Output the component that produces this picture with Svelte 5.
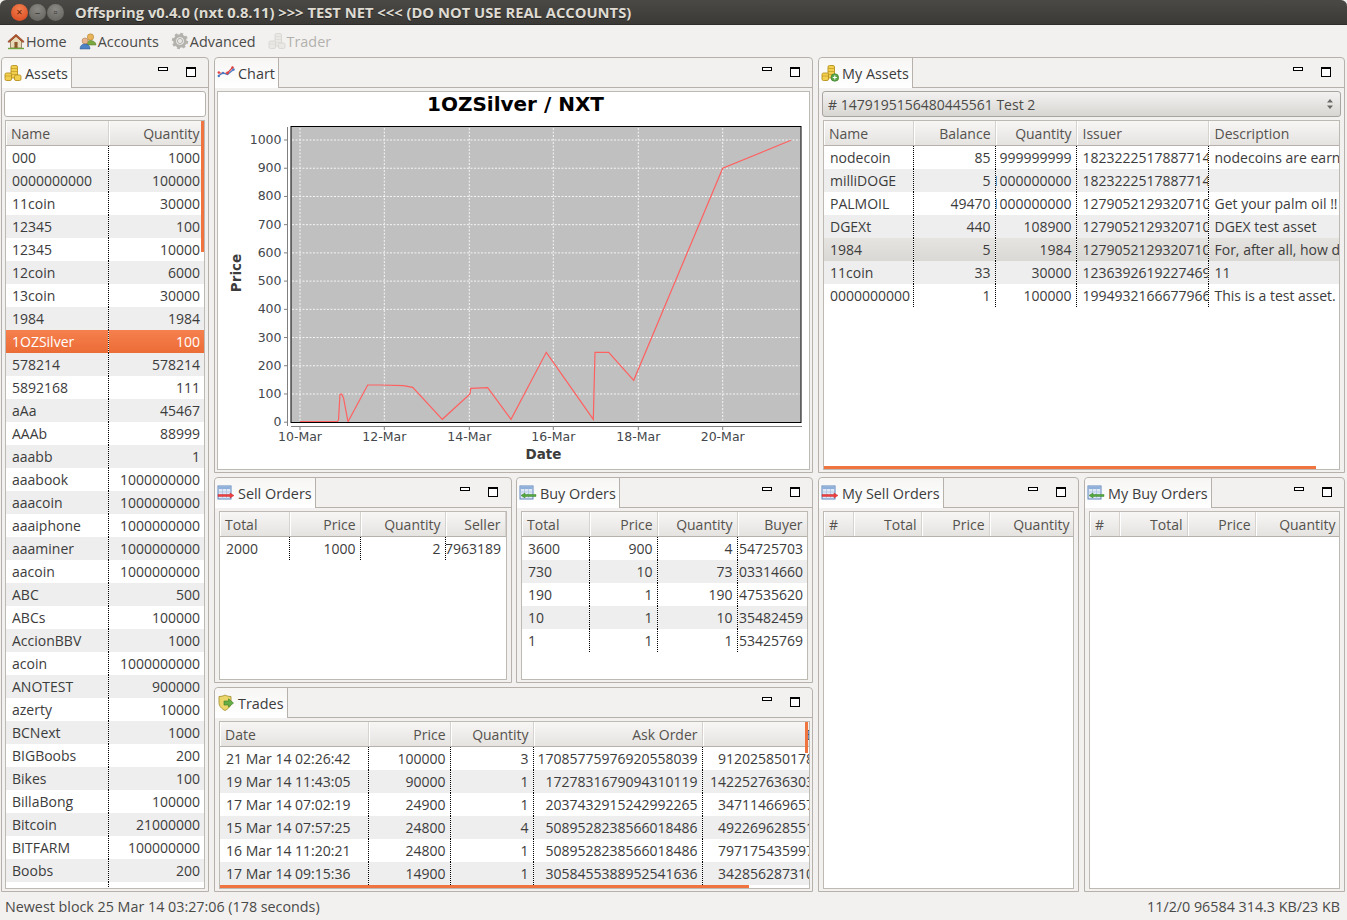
<script>
  const assets = [['000','1000'],['0000000000','100000'],['11coin','30000'],['12345','100'],['12345','10000'],['12coin','6000'],['13coin','30000'],['1984','1984'],['1OZSilver','100'],['578214','578214'],['5892168','111'],['aAa','45467'],['AAAb','88999'],['aaabb','1'],['aaabook','1000000000'],['aaacoin','1000000000'],['aaaiphone','1000000000'],['aaaminer','1000000000'],['aacoin','1000000000'],['ABC','500'],['ABCs','100000'],['AccionBBV','1000'],['acoin','1000000000'],['ANOTEST','900000'],['azerty','10000'],['BCNext','1000'],['BIGBoobs','200'],['Bikes','100'],['BillaBong','100000'],['Bitcoin','21000000'],['BITFARM','100000000'],['Boobs','200'],['\u00a0','\u00a0']];
  const myAssets = [
    ['nodecoin','85','999999999','18232225178877144','nodecoins are earned by running nodes'],
    ['milliDOGE','5','1000000000','18232225178877144',''],
    ['PALMOIL','49470','1000000000','12790521293207100','Get your palm oil !!'],
    ['DGEXt','440','108900','12790521293207100','DGEX test asset'],
    ['1984','5','1984','12790521293207100','For, after all, how do we know'],
    ['11coin','33','30000','12363926192274690','11'],
    ['0000000000','1','100000','19949321666779660','This is a test asset.']];
  const trades = [
    ['21 Mar 14 02:26:42','100000','3','17085775976920558039','9120258501780000000'],
    ['19 Mar 14 11:43:05','90000','1','1727831679094310119','14225276363030000000'],
    ['17 Mar 14 07:02:19','24900','1','2037432915242992265','3471146696570000000'],
    ['15 Mar 14 07:57:25','24800','4','5089528238566018486','4922696285510000000'],
    ['16 Mar 14 11:20:21','24800','1','5089528238566018486','7971754359970000000'],
    ['17 Mar 14 09:15:36','14900','1','3058455388952541636','3428562873100000000']];
  const buys = [['3600','900','4','1154725703'],['730','10','73','1103314660'],['190','1','190','1147535620'],['10','1','10','1135482459'],['1','1','1','1153425769']];

  const yTicks = [0,100,200,300,400,500,600,700,800,900,1000].map(v => ({ v, y: 422.2 - v * 0.2822 }));
  const xTicks = [['10-Mar',300],['12-Mar',384.3],['14-Mar',469.3],['16-Mar',553.3],['18-Mar',638.3],['20-Mar',722.7]];
  const line = '300,421.7 337.3,421.7 338.5,420 340,394.5 341.7,394 343.5,398 348,421.7 367.7,385 380,385 403.3,385.7 412.7,387.3 442.3,419.3 470,394 470.7,388.3 487.7,387.7 511,419.3 546.3,352.3 593.3,419.3 595,352.3 608.7,352.3 633.7,380.3 722.7,168.3 791,140.3';
</script>

{#snippet icon(name)}
  <svg class="ico" viewBox="0 0 18 18" width="18" height="18" aria-hidden="true">
    {#if name === 'home'}
      <path d="M3.500 9v7h11V9L9 4z" fill="#e8d9b8" stroke="#8a7350" stroke-width=".8"/>
      <path d="M.8 9.600 9 2.200l8.200 7.400-1.200 1L9 4.400 2 10.600z" fill="#b5532a" stroke="#7c3a1c" stroke-width=".5"/>
      <rect x="7.400" y="10" width="3.200" height="6" fill="#8a5a2c"/>
      <rect x="1" y="15.800" width="16" height="1.400" fill="#6fa33c"/>
    {:else if name === 'people'}
      <circle cx="11.500" cy="5" r="3.200" fill="#e9b35a" stroke="#a97a2a" stroke-width=".5"/>
      <path d="M7 13c0-3 2-4.500 4.500-4.500S17 10 17 13z" fill="#7aa83f" stroke="#55782a" stroke-width=".5"/>
      <circle cx="6" cy="9" r="3" fill="#e8b48a" stroke="#a8754f" stroke-width=".5"/>
      <path d="M1 17c0-3.500 2.200-5 5-5s5 1.500 5 5z" fill="#4d82c4" stroke="#2f5a92" stroke-width=".5"/>
    {:else if name === 'gear'}
      <circle cx="9" cy="9" r="5.300" fill="none" stroke="#b4b2ad" stroke-width="3"/>
      <circle cx="9" cy="9" r="7" fill="none" stroke="#b4b2ad" stroke-width="2.400" stroke-dasharray="2.800 2.700"/>
      <circle cx="9" cy="9" r="2.600" fill="#e8e6e2" stroke="#8c8a85" stroke-width=".6"/>
    {:else if name === 'coinsgrey' || name === 'coins' || name === 'coinsplus'}
      {@const f = name === 'coinsgrey' ? '#e9e8e5' : '#f3cf4f'}
      {@const s = name === 'coinsgrey' ? '#d8d6d2' : '#b8921f'}
      <rect x="7" y="1.500" width="6.500" height="12.500" rx="1.500" fill={f} stroke={s} stroke-width=".9"/>
      <path d="M7 4.500h6.500M7 7.500h6.500M7 10.500h6.500" stroke={s} stroke-width=".6"/>
      <rect x="1" y="9" width="6.500" height="7.500" rx="1.500" fill={f} stroke={s} stroke-width=".9"/>
      <path d="M1 12h6.500" stroke={s} stroke-width=".6"/>
      <rect x="10.500" y="11" width="6.500" height="5.500" rx="1.500" fill={f} stroke={s} stroke-width=".9"/>
      {#if name === 'coinsplus'}
        <circle cx="13.800" cy="13.500" r="3.800" fill="#5aa84a" stroke="#3a7a30" stroke-width=".6"/>
        <path d="M11.800 13.500h4M13.800 11.500v4" stroke="#fff" stroke-width="1.100"/>
      {/if}
    {:else if name === 'chart'}
      <path d="M1 8.500 6 9.500 10.500 9 16 3" fill="none" stroke="#e2403f" stroke-width="1.200"/>
      <path d="M1 12 6 9 10.500 10.500 16.500 5.500" fill="none" stroke="#4a78c4" stroke-width="1.200"/>
      <g fill="#e2403f"><circle cx="1.800" cy="8.500" r="1.200"/><circle cx="10.500" cy="9" r="1.400"/><circle cx="15.500" cy="3.500" r="1.200"/></g>
      <g fill="#4a78c4"><circle cx="1.800" cy="12" r="1.200"/><circle cx="6" cy="9" r="1.200"/><circle cx="16.500" cy="5.500" r="1.200"/></g>
    {:else if name === 'sell' || name === 'buy'}
      <rect x="1" y="2" width="13" height="13" fill="#dfe8f4" stroke="#5f86bc" stroke-width="1"/>
      <rect x="1.500" y="2.500" width="12" height="2.500" fill="#8fb0da"/>
      <path d="M1.500 8h12M1.500 11h12M5.500 5v10M9.500 5v10" stroke="#a8c0de" stroke-width=".7"/>
      {#if name === 'sell'}
        <path d="M1 10.500h12V9l4 2.500-4 2.500v-1.500H1z" fill="#ee4040" stroke="#c42020" stroke-width=".4"/>
      {:else}
        <path d="M17 10.500H6V9l-4 2.500L6 14v-1.500h11z" fill="#55a83c" stroke="#2f7a20" stroke-width=".4"/>
      {/if}
    {:else if name === 'trades'}
      <path d="M2 2.500c3 0 5-.800 6-1.500 1 .7 3 1.500 6 1.500v6c0 4-3 6.500-6 8-3-1.500-6-4-6-8z" fill="#ecd66a" stroke="#a8953a" stroke-width=".9"/>
      <path d="M7 7h4.500V4.800L16.500 9l-5 4.200V11H7z" fill="#67ad45" stroke="#3e7c28" stroke-width=".6"/>
    {/if}
  </svg>
{/snippet}

{#snippet panelHead(title, ic)}
  <div class="head">
    <div class="tab">{@render icon(ic)}<span>{title}</span></div>
    <div class="ctrls"><span class="min"></span><span class="max"></span></div>
  </div>
{/snippet}

{#snippet grid(heads, cols, rows, aligns, opts = {})}
  <table style={`width:${cols.reduce((a, b) => a + b, 0)}px`}>
    <colgroup>{#each cols as c}<col style={`width:${c}px`} />{/each}</colgroup>
    <thead><tr>{#each heads as h, i}<th class:r={aligns[i] === 'r'}>{h}</th>{/each}</tr></thead>
    <tbody>
      {#each rows as row, ri}
        <tr class:alt={ri % 2 === 1} class:sel={opts.sel === ri} class:hov={opts.hov === ri}>
          {#each row as c, i}<td><div class="cell" class:r={aligns[i] === 'r'}><span>{c}</span></div></td>{/each}
        </tr>
      {/each}
    </tbody>
  </table>
{/snippet}

<div class="win">
  <header class="title">
    <div class="btns"><span class="b close">×</span><span class="b mn">–</span><span class="b mx">▫</span></div>
    <span class="ttl">Offspring v0.4.0 (nxt 0.8.11) &gt;&gt;&gt; TEST NET &lt;&lt;&lt; (DO NOT USE REAL ACCOUNTS)</span>
  </header>
  <nav class="tools">
    <span class="tool">{@render icon('home')}Home</span>
    <span class="tool">{@render icon('people')}Accounts</span>
    <span class="tool">{@render icon('gear')}Advanced</span>
    <span class="tool off">{@render icon('coinsgrey')}Trader</span>
  </nav>

  <main class="desk">
    <section class="panel left">
      {@render panelHead('Assets', 'coins')}
      <div class="body">
        <div class="search"></div>
        <div class="frame">
          {@render grid(['Name','Quantity'], [102,96], assets, ['l','r'], { sel: 8 })}
          <i class="vbar" style="height:131px"></i>
        </div>
      </div>
    </section>

    <div class="mid">
      <section class="panel chart">
        {@render panelHead('Chart', 'chart')}
        <div class="body wide">
          <div class="frame">
            <svg class="plot" viewBox="218 92 593 378" width="593" height="378">
              <text x="515.500" y="111" class="ct" text-anchor="middle">1OZSilver / NXT</text>
              <rect x="291" y="126.500" width="510" height="296" fill="#c0c0c0"/>
              <g stroke="#fff" stroke-width="1" stroke-dasharray="2 1.500" opacity=".85">
                {#each yTicks.slice(1) as t}<line x1="292" x2="800" y1={t.y} y2={t.y}/>{/each}
                {#each xTicks as t}<line y1="128" y2="421" x1={t[1]} x2={t[1]}/>{/each}
              </g>
              <polyline points={line} fill="none" stroke="#ff6060" stroke-width="1.200"/>
              <rect x="291" y="126.500" width="510" height="296" fill="none" stroke="#000" stroke-width="1"/>
              <g stroke="#808080" fill="none">
                <path d="M287.500 127v299M291 426.500h511"/>
                {#each yTicks as t}<line x1="284" x2="288" y1={t.y} y2={t.y}/>{/each}
                {#each xTicks as t}<line y1="426" y2="430" x1={t[1]} x2={t[1]}/>{/each}
              </g>
              {#each yTicks as t}<text x="281.500" y={t.y + 4} text-anchor="end" class="tk">{t.v}</text>{/each}
              {#each xTicks as t}<text x={t[1]} y="441" text-anchor="middle" class="tk">{t[0]}</text>{/each}
              <text x="543.500" y="459" text-anchor="middle" class="al">Date</text>
              <text transform="translate(241 273) rotate(-90)" text-anchor="middle" class="al">Price</text>
            </svg>
          </div>
        </div>
      </section>
      <div class="orders">
        <section class="panel tight">
          {@render panelHead('Sell Orders', 'sell')}
          <div class="body inset"><div class="frame">
            {@render grid(['Total','Price','Quantity','Seller'], [69,71,85,60], [['2000','1000','2','17963189']], ['l','r','r','r'])}
          </div></div>
        </section>
        <section class="panel">
          {@render panelHead('Buy Orders', 'buy')}
          <div class="body inset"><div class="frame">
            {@render grid(['Total','Price','Quantity','Buyer'], [67,68,80,70], buys, ['l','r','r','r'])}
          </div></div>
        </section>
      </div>
      <section class="panel trades">
        {@render panelHead('Trades', 'trades')}
        <div class="body inset"><div class="frame over">
          {@render grid(['Date','Price','Quantity','Ask Order','Bid Order'], [148,82,83,169,172], trades, ['l','r','r','r','r'])}
          <i class="vbar" style="height:31px"></i>
          <i class="hbar" style="width:529px"></i>
        </div></div>
      </section>
    </div>

    <div class="right">
      <section class="panel myassets tight">
        {@render panelHead('My Assets', 'coinsplus')}
        <div class="body">
          <div class="combo"><span># 1479195156480445561 Test 2</span><svg width="8" height="14" viewBox="0 0 8 14" aria-hidden="true"><path d="M4 2 7 5.500H1zM4 12 1 8.500h6z" fill="#6a6864"/></svg></div>
          <div class="frame near">
            {@render grid(['Name','Balance','Quantity','Issuer','Description'], [89,82,81,132,132], myAssets, ['l','r','r','l','l'], { hov: 4 })}
            <i class="hbar" style="width:492px"></i>
          </div>
        </div>
      </section>
      <div class="myorders">
        <section class="panel">
          {@render panelHead('My Sell Orders', 'sell')}
          <div class="body inset"><div class="frame">
            {@render grid(['#','Total','Price','Quantity'], [29,68,68,85], [], ['l','r','r','r'])}
          </div></div>
        </section>
        <section class="panel">
          {@render panelHead('My Buy Orders', 'buy')}
          <div class="body inset"><div class="frame">
            {@render grid(['#','Total','Price','Quantity'], [29,68,68,85], [], ['l','r','r','r'])}
          </div></div>
        </section>
      </div>
    </div>
  </main>

  <footer class="status"><span>Newest block 25 Mar 14 03:27:06 (178 seconds)</span><span>11/2/0 96584 314.3 KB/23 KB</span></footer>
</div>

<style>
  :global(body) { margin: 0; background: #f2f1f0; }
  .win { width: 1347px; height: 920px; display: flex; flex-direction: column; font: 14px "Open Sans", "Noto Sans", sans-serif; color: #3c3c3c; overflow: hidden; }
  .title { height: 25px; flex: none; display: flex; align-items: center; padding-bottom: 2px; box-sizing: border-box; background: linear-gradient(#4a4945, #3a3935); border-radius: 6px 6px 0 0; box-shadow: inset 0 -1px #2e2d2a; }
  .btns { display: flex; gap: 1px; margin-left: 11px; width: 64px; margin-top: 2px; }
  .b { width: 17px; height: 17px; border-radius: 50%; font-size: 11px; line-height: 16px; text-align: center; color: #3b3a36; background: radial-gradient(circle at 50% 30%, #8a8983, #5f5e59); }
  .b.close { background: radial-gradient(circle at 50% 30%, #f2814f, #d8431c); color: #6a1f08; }
  .ttl { font-size: 14.750px; font-weight: 700; color: #dfdbd2; white-space: nowrap; text-shadow: 0 1px #222; }

  .tools { height: 32px; flex: none; display: flex; align-items: center; padding-left: 7px; gap: 12px; color: #4a4a48; font-size: 14.4px; }
  .tool { display: flex; align-items: center; gap: 1px; }
  .tool.off { color: #b3b1ad; }
  .ico { flex: none; }

  .desk { flex: none; height: 835px; display: grid; grid-template-columns: 208px 599px 527px; gap: 5px; padding-left: 1px; }
  .mid, .right { display: grid; gap: 4px; min-height: 0; }
  .mid { grid-template-rows: 416px 206px 205px; }
  .right { grid-template-rows: 416px 415px; }
  .orders { display: grid; grid-template-columns: 298px 297px; gap: 4px; }
  .myorders { display: grid; grid-template-columns: 261px 261px; gap: 5px; }

  .panel { display: flex; flex-direction: column; border: 1px solid #b6b2ab; border-radius: 4px 4px 0 0; background: #f2f1f0; min-height: 0; min-width: 0; }
  .head { height: 30px; flex: none; display: flex; justify-content: space-between; box-shadow: inset 0 -1px #b6b2ab; }
  .tab { display: flex; align-items: center; gap: 3px; padding: 0 3px 0 2px; background: linear-gradient(#f7f6f5, #fff); border-right: 1px solid #b6b2ab; border-radius: 4px 0 0 0; color: #3c3c3c; font-size: 14.4px; }
  .ctrls { display: flex; gap: 18px; padding: 9px 12px 0 0; align-items: flex-start; }
  .tight .ctrls { padding-right: 13px; }
  .min { width: 8px; height: 2px; border: 1px solid #000; background: #fff; }
  .max { width: 8px; height: 7px; border: 1px solid #000; border-top-width: 2px; background: #fff; }
  .body { flex: 1; min-height: 0; display: flex; flex-direction: column; gap: 3px; padding: 3px 3px 2px; background: #f2f1f0; }
  .body.wide { padding-left: 2px; padding-right: 2px; }
  .body.inset { padding-left: 4px; padding-right: 4px; }
  .search { height: 24px; flex: none; background: #fff; border: 1px solid #b6b2ab; border-radius: 3px; margin: 0 -1px; }
  .frame { flex: 1; min-height: 0; position: relative; overflow: hidden; background: #fff; border: 1px solid #bdbab4; }
  .frame.near { margin: 0 1px; }
  .frame.over { margin-right: -2px; }
  .frame.over .vbar { right: 1px; }
  .combo { height: 24px; flex: none; display: flex; align-items: center; justify-content: space-between; padding: 0 6px 0 5px; border: 1px solid #a8a5a0; border-radius: 3px; background: linear-gradient(#f3f2f1, #d8d6d2); color: #4a4a48; }

  table { table-layout: fixed; border-collapse: collapse; border-spacing: 0; }
  th { height: 24px; padding: 0 4px 0 5px; font-weight: 400; text-align: left; color: #55524e; background: linear-gradient(#f7f6f5, #e5e3e0); border-bottom: 1px solid #b6b2ab; border-right: 1px solid #d6d3ce; box-shadow: inset 1px 0 #fff; overflow: hidden; white-space: nowrap; }
  th:not(:first-child) { padding-left: 6px; }
  th.r { text-align: right; }
  td { height: 23px; padding: 0; border-right: 1px dotted #000; overflow: hidden; }
  td:last-child { border-right: 0; }
  tr.alt td { background: #eeeeee; }
  tr.hov td { background: linear-gradient(#e6e4e1, #dad8d4); }
  tr.sel td { background: linear-gradient(#f5804e, #ec6c36); color: #fff; border-right-color: #33200f; }
  .cell { display: flex; padding: 0 4px 0 6px; white-space: nowrap; overflow: hidden; line-height: 23px; }
  .cell.r { justify-content: flex-end; }
  .cell span { flex: none; }

  .vbar { position: absolute; top: 0; right: 0; width: 3px; background: #f0743f; }
  .hbar { position: absolute; left: 0; bottom: 0; height: 3px; background: #f0743f; }

  .plot { display: block; }
  .ct { font: 700 20px "DejaVu Sans", sans-serif; fill: #000; }
  .tk { font: 12.500px "DejaVu Sans", sans-serif; fill: #44474c; }
  .al { font: 700 13.500px "DejaVu Sans", sans-serif; fill: #3c3c3c; }

  .status { flex: 1; display: flex; justify-content: space-between; align-items: center; padding: 0 7px 0 5px; color: #4a4a48; font-size: 14.3px; }
</style>
